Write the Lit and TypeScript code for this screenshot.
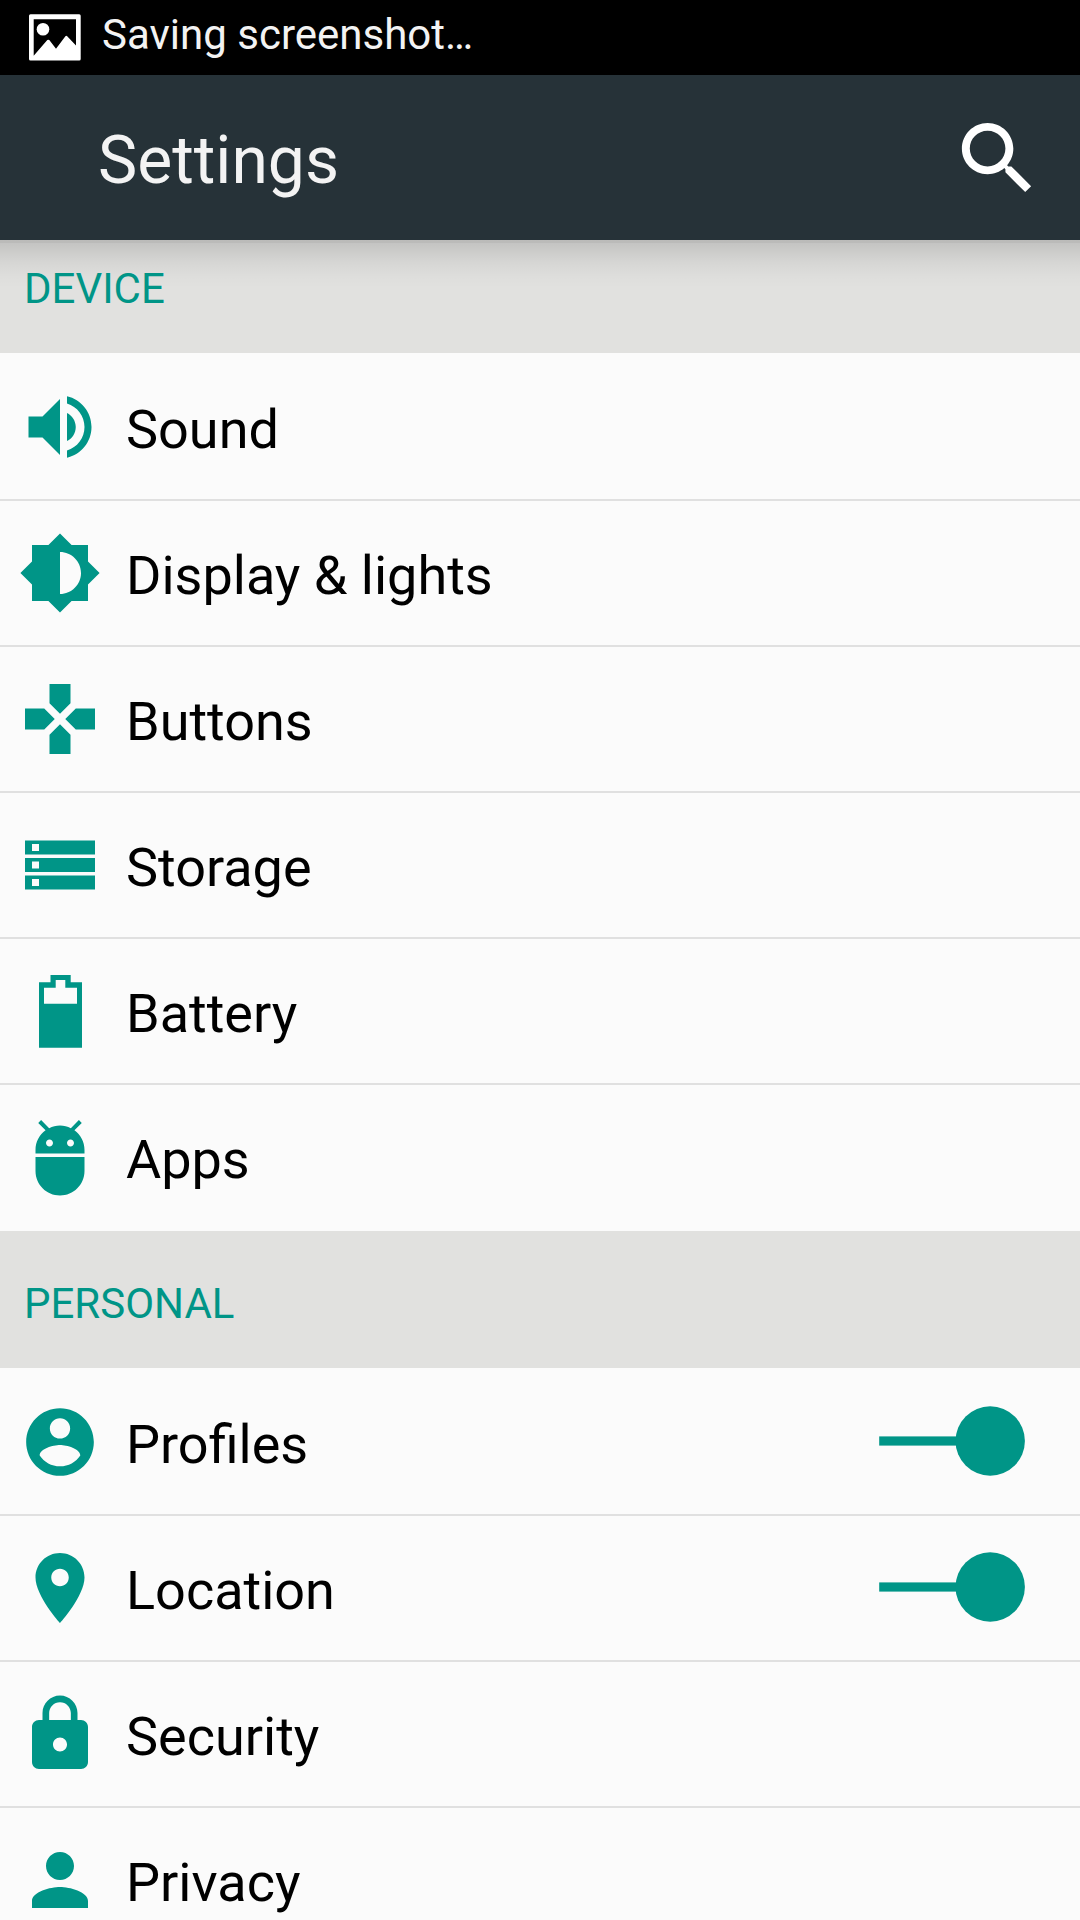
import { LitElement, html, css, svg } from "lit";
import { customElement, property } from "lit/decorators.js";

const P = (d: string) => svg`<path fill-rule="evenodd" d=${d}></path>`;

const ICONS: Record<string, { box: string; art: unknown }> = {
  sound: {
    box: "0 0 24 24",
    art: P("M3 9v6h4l5 5V4L7 9H3zm13.5 3c0-1.77-1.02-3.29-2.5-4.03v8.05c1.48-.73 2.5-2.25 2.5-4.02zM14 3.23v2.06c2.89.86 5 3.54 5 6.71s-2.11 5.85-5 6.71v2.06c4.01-.91 7-4.49 7-8.77s-2.99-7.86-7-8.77z"),
  },
  display: {
    box: "0 0 24 24",
    art: P("M20 15.31L23.31 12 20 8.69V4h-4.69L12 .69 8.69 4H4v4.69L.69 12 4 15.31V20h4.69L12 23.31 15.31 20H20v-4.69zM12 18V6c3.31 0 6 2.69 6 6s-2.69 6-6 6z"),
  },
  buttons: {
    box: "0 0 24 24",
    art: P("M15 7.5V2H9v5.5l3 3 3-3zM7.5 9H2v6h5.5l3-3-3-3zM9 16.5V22h6v-5.5l-3-3-3 3zM16.5 9l-3 3 3 3H22V9h-5.5z"),
  },
  storage: {
    box: "0 0 24 24",
    art: P("M2 5h20v4H2zM4 6v2h2V6zM2 10h20v4H2zM4 11v2h2v-2zM2 15h20v4H2zM4 16v2h2v-2z"),
  },
  battery: {
    box: "0 0 84 84",
    art: P("M32.5 6h20.2v7.3H64v65.4H21V13.3h11.5zM37.7 11v7.7H26v16h33v-16H47.3V11z"),
  },
  apps: {
    box: "0 0 24 24",
    art: P("M5 16c0 3.87 3.13 7 7 7s7-3.13 7-7v-4H5v4zM16.12 4.37l2.1-2.1-.82-.83-2.3 2.31C14.16 3.28 13.12 3 12 3s-2.16.28-3.09.75L6.6 1.44l-.82.83 2.1 2.1C6.14 5.64 5 7.68 5 10v1h14v-1c0-2.32-1.14-4.36-2.88-5.63zM9 9c-.55 0-1-.45-1-1s.45-1 1-1 1 .45 1 1-.45 1-1 1zm6 0c-.55 0-1-.45-1-1s.45-1 1-1 1 .45 1 1-.45 1-1 1z"),
  },
  profiles: {
    box: "-0.41 -0.41 24.82 24.82",
    art: P("M12 2C6.48 2 2 6.48 2 12s4.48 10 10 10 10-4.48 10-10S17.52 2 12 2zm0 3c1.66 0 3 1.34 3 3s-1.34 3-3 3-3-1.34-3-3 1.34-3 3-3zm0 14.2c-2.5 0-4.71-1.28-6-3.22.03-1.99 4-3.08 6-3.08 1.99 0 5.97 1.09 6 3.08-1.29 1.94-3.5 3.22-6 3.22z"),
  },
  location: {
    box: "0 0 24 24",
    art: P("M12 2C8.13 2 5 5.13 5 9c0 5.25 7 13 7 13s7-7.75 7-13c0-3.87-3.13-7-7-7zm0 9.5c-1.38 0-2.5-1.12-2.5-2.5s1.12-2.5 2.5-2.5 2.5 1.12 2.5 2.5-1.12 2.5-2.5 2.5z"),
  },
  security: {
    box: "0 0 24 24",
    art: P("M18 8h-1V6c0-2.76-2.24-5-5-5S7 3.24 7 6v2H6c-1.1 0-2 .9-2 2v10c0 1.1.9 2 2 2h12c1.1 0 2-.9 2-2V10c0-1.1-.9-2-2-2zm-6 9c-1.1 0-2-.9-2-2s.9-2 2-2 2 .9 2 2-.9 2-2 2zm3.1-9H8.9V6c0-1.71 1.39-3.1 3.1-3.1 1.71 0 3.1 1.39 3.1 3.1v2z"),
  },
  privacy: {
    box: "0 0 24 24",
    art: P("M12 12c2.21 0 4-1.79 4-4s-1.79-4-4-4-4 1.79-4 4 1.79 4 4 4zm0 2c-2.67 0-8 1.34-8 4v2h16v-2c0-2.66-5.33-4-8-4z"),
  },
};

interface Item {
  icon: string;
  label: string;
  on?: boolean;
}

const SECTIONS: { title: string; items: Item[] }[] = [
  {
    title: "DEVICE",
    items: [
      { icon: "sound", label: "Sound" },
      { icon: "display", label: "Display & lights" },
      { icon: "buttons", label: "Buttons" },
      { icon: "storage", label: "Storage" },
      { icon: "battery", label: "Battery" },
      { icon: "apps", label: "Apps" },
    ],
  },
  {
    title: "PERSONAL",
    items: [
      { icon: "profiles", label: "Profiles", on: true },
      { icon: "location", label: "Location", on: true },
      { icon: "security", label: "Security" },
      { icon: "privacy", label: "Privacy" },
    ],
  },
];

@customElement("settings-row")
class SettingsRow extends LitElement {
  @property({ attribute: false }) item!: Item;

  static styles = css`
    :host {
      display: flex;
      align-items: center;
      box-sizing: border-box;
      height: 146px;
      padding: 0 53px 0 18px;
      border-bottom: 2px solid #e0e0e0;
      color: #000;
    }
    :host(:last-child) {
      border-bottom-color: transparent;
    }
    .icon {
      width: 84px;
      height: 84px;
      fill: #009587;
      flex: none;
    }
    .label {
      flex: 1;
      margin-left: 24px;
      padding-top: 5px;
      font-size: 54px;
      line-height: 64px;
      white-space: nowrap;
    }
    .switch {
      width: 150px;
      height: 72px;
      margin-top: -2px;
      fill: #009587;
    }
  `;

  render() {
    const icon = ICONS[this.item.icon];
    return html`
      <svg class="icon" viewBox=${icon.box}>${icon.art}</svg>
      <span class="label">${this.item.label}</span>
      ${this.item.on
        ? html`<svg class="switch" viewBox="0 0 150 72">
            <rect x="2.2" y="31.4" width="90" height="9.2"></rect>
            <circle cx="113.2" cy="36" r="34.7"></circle>
          </svg>`
        : null}
    `;
  }
}

@customElement("app-root")
class AppRoot extends LitElement {
  static styles = css`
    :host {
      display: flex;
      flex-direction: column;
      width: 1080px;
      height: 1920px;
      overflow: hidden;
      background: #fbfbfb;
      font-family: Roboto, sans-serif;
    }
    .status {
      display: flex;
      align-items: center;
      flex: none;
      box-sizing: border-box;
      height: 75px;
      padding-left: 28px;
      background: #000;
      color: #f3f3f3;
      font-size: 42px;
      line-height: 50px;
    }
    .picture {
      width: 54px;
      height: 50px;
      fill: #fff;
    }
    .status-text {
      margin-left: 20px;
      padding-bottom: 5px;
    }
    .bar {
      display: flex;
      align-items: center;
      justify-content: space-between;
      flex: none;
      box-sizing: border-box;
      height: 165px;
      padding: 0 35px 0 98px;
      background: #263238;
      color: #f3f3f3;
    }
    .title {
      padding-top: 6px;
      font-size: 66px;
      line-height: 78px;
    }
    .search {
      width: 95px;
      height: 95px;
      margin-top: 1px;
      fill: #fff;
    }
    .list {
      flex: 1;
      min-height: 0;
      overflow: hidden;
      background: linear-gradient(
          rgba(0, 0, 0, 0.17) 3px,
          rgba(0, 0, 0, 0.13) 3px,
          rgba(0, 0, 0, 0.05) 22px,
          rgba(0, 0, 0, 0.015) 36px,
          rgba(0, 0, 0, 0) 48px
        )
        #e1e1df;
    }
    .section:first-child {
      margin-top: -24px;
    }
    .heading {
      box-sizing: border-box;
      height: 137px;
      padding: 48px 0 0 24px;
      color: #009587;
      font-size: 42px;
      line-height: 50px;
    }
    .rows {
      padding-top: 2px;
      background: #fbfbfb;
    }
  `;

  render() {
    return html`
      <div class="status">
        <svg class="picture" viewBox="0 0 54 50">
          <path fill-rule="evenodd" d="M2.5 1.2h48.7q1.5 0 1.5 1.5V46q0 1.5-1.5 1.5H2.5Q1 47.5 1 46V2.7q0-1.5 1.5-1.5zM5.7 6.2v36.5l13.6-15.6q1-.8 2 0l6.7 8.7 9.4-12.6q.9-.8 1.8 0L48 32.5V6.2z"></path>
          <circle cx="15" cy="16.2" r="6.3"></circle>
        </svg>
        <span class="status-text">Saving screenshot…</span>
      </div>
      <div class="bar">
        <span class="title">Settings</span>
        <svg class="search" viewBox="0 0 24 24">
          <path d="M15.5 14h-.79l-.28-.27C15.41 12.59 16 11.11 16 9.5 16 5.91 13.09 3 9.5 3S3 5.91 3 9.5 5.91 16 9.5 16c1.61 0 3.09-.59 4.23-1.57l.27.28v.79l5 4.99L20.49 19l-4.99-5zm-6 0C7.01 14 5 11.99 5 9.5S7.01 5 9.5 5 14 7.01 14 9.5 11.99 14 9.5 14z"></path>
        </svg>
      </div>
      <div class="list">
        ${SECTIONS.map(
          (s) => html`<div class="section">
            <div class="heading">${s.title}</div>
            <div class="rows">
              ${s.items.map((i) => html`<settings-row .item=${i}></settings-row>`)}
            </div>
          </div>`
        )}
      </div>
    `;
  }
}
